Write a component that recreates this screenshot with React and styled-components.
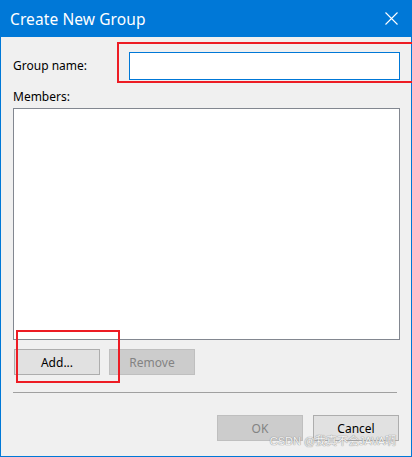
import React from "react";
import styled, { createGlobalStyle } from "styled-components";

const GlobalStyle = createGlobalStyle`
  html, body {
    margin: 0;
    padding: 0;
    background: #f0f0f0;
  }
  * {
    box-sizing: border-box;
  }
`;

const Window = styled.div`
  position: relative;
  width: 412px;
  height: 457px;
  border: 1px solid #0078d7;
  border-top: none;
  background: #f0f0f0;
  display: flex;
  flex-direction: column;
  font-family: "Noto Sans", "Noto Sans CJK SC", sans-serif;
  font-size: 12px;
  color: #000;
`;

const TitleBar = styled.div`
  height: 37px;
  margin: 0 -1px;
  background: #0078d7;
  color: #fff;
  display: flex;
  align-items: center;
  justify-content: space-between;
  padding: 0 14px 0 10px;
`;

const Title = styled.div`
  font-size: 15.5px;
  letter-spacing: 0.1px;
`;

const CloseButton = styled.div`
  width: 14px;
  height: 14px;
  display: flex;
  align-items: center;
  justify-content: center;
`;

const Body = styled.div`
  flex: 1;
  display: flex;
  flex-direction: column;
  padding: 15px 11px 0 12px;
`;

const NameRow = styled.div`
  display: flex;
  align-items: center;
  height: 28px;
`;

const Label = styled.label`
  display: block;
  width: ${(p) => p.width || "auto"};
  margin-top: ${(p) => p.mt || 0}px;
  line-height: 16px;
`;

const TextInput = styled.input`
  flex: 1;
  height: 28px;
  border: 1px solid #0078d7;
  background: #fff;
  outline: none;
  padding: 0 4px;
  font: inherit;
`;

const ListBox = styled.div`
  margin-top: 3px;
  height: 232px;
  border: 1px solid #828790;
  background: #fff;
`;

const ButtonRow = styled.div`
  display: flex;
  gap: ${(p) => p.gap}px;
  justify-content: ${(p) => p.justify || "flex-start"};
  margin-top: ${(p) => p.mt}px;
  padding: 0 1px;
`;

const Button = styled.button`
  width: 86px;
  height: 26px;
  padding: 0;
  font-family: inherit;
  font-size: 12px;
  border: 1px solid ${(p) => (p.disabled ? "#bfbfbf" : "#adadad")};
  background: ${(p) => (p.disabled ? "#cccccc" : "#e1e1e1")};
  color: ${(p) => (p.disabled ? "#838383" : "#000")};
`;

const Separator = styled.hr`
  margin: 17px 3px 0 0;
  border: none;
  border-top: 1px solid #a0a0a0;
  height: 0;
`;

const Highlight = styled.div`
  position: absolute;
  left: ${(p) => p.x}px;
  top: ${(p) => p.y}px;
  width: ${(p) => p.w}px;
  height: ${(p) => p.h}px;
  border: 2px solid #ed1c24;
  pointer-events: none;
`;

const Watermark = styled.div`
  position: absolute;
  right: 15px;
  bottom: 8px;
  font-family: "Liberation Sans", "Noto Sans CJK SC", sans-serif;
  font-size: 11px;
  line-height: 13px;
  color: #f4f4f4;
  text-shadow: 0 0 1px #8a8a8a, 0 0 1px #8a8a8a;
`;

const App = () => (
  <>
    <GlobalStyle />
    <Window>
      <TitleBar>
        <Title>Create New Group</Title>
        <CloseButton>
          <svg width="13" height="13" viewBox="0 0 13 13">
            <path d="M0.5 0.5 L12.5 12.5 M12.5 0.5 L0.5 12.5" stroke="#fff" strokeWidth="1.1" />
          </svg>
        </CloseButton>
      </TitleBar>
      <Body>
        <NameRow>
          <Label width="116px">Group name:</Label>
          <TextInput type="text" />
        </NameRow>
        <Label mt={9}>Members:</Label>
        <ListBox />
        <ButtonRow gap={9} mt={9}>
          <Button>Add...</Button>
          <Button disabled>Remove</Button>
        </ButtonRow>
        <Separator />
        <ButtonRow gap={10} mt={22} justify="flex-end">
          <Button disabled>OK</Button>
          <Button>Cancel</Button>
        </ButtonRow>
      </Body>
      <Highlight x={116} y={42} w={300} h={41} />
      <Highlight x={15} y={330} w={104} h={53} />
      <Watermark>CSDN @我真不会JAVA啊</Watermark>
    </Window>
  </>
);

export default App;
